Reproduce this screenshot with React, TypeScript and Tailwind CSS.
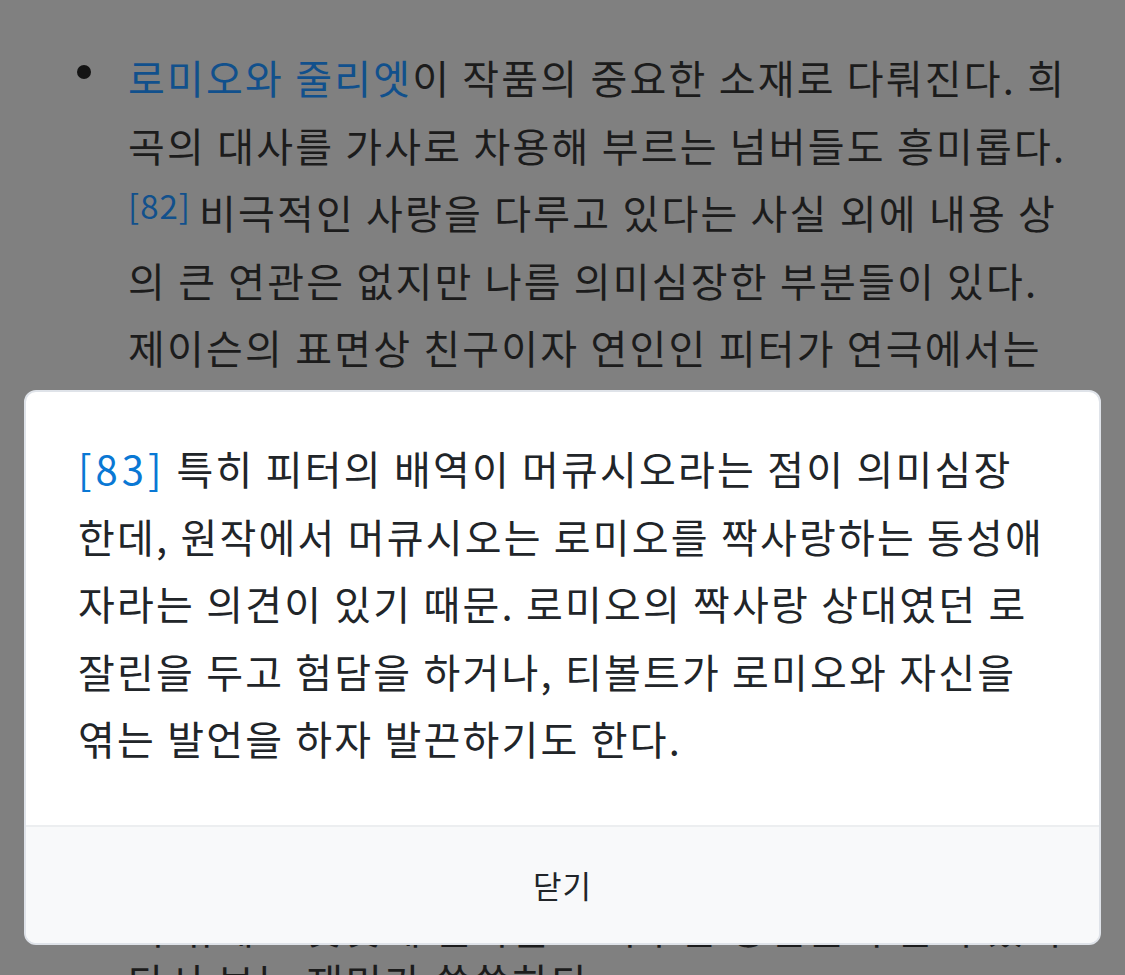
import React from "react";

const FONT = { fontFamily: '"Noto Sans CJK KR", "Noto Sans", sans-serif' };

const articleLines: React.ReactNode[] = [
  <>
    <a className="text-[#11508c]">로미오와 줄리엣</a>이 작품의 중요한 소재로 다뤄진다. 희
  </>,
  <>곡의 대사를 가사로 차용해 부르는 넘버들도 흥미롭다.</>,
  <>
    <span className="relative top-[-10px] mr-[8px] text-[33px] leading-[0] tracking-[1px] text-[#11508c]">[82]</span>
    비극적인 사랑을 다루고 있다는 사실 외에 내용 상
  </>,
  <>의 큰 연관은 없지만 나름 의미심장한 부분들이 있다.</>,
  <>제이슨의 표면상 친구이자 연인인 피터가 연극에서는</>,
  <>로미오의 절친한 친구인 머큐시오 역을 맡게 되는데,</>,
  <>이는 극 중 두 사람의 관계를 은근히 암시하는 장치이</>,
  <>기도 하다. 또한 작품 후반부의 결말 역시 원작의 비극</>,
  <>적인 결말과 겹쳐 보이도록 연출되어 있어 관객들에게</>,
  <>여러 가지 해석의 여지를 남긴다. 특히 마지막 장면에</>,
  <>서 두 사람이 나누는 대사는 원작의 구절을 그대로 가</>,
  <>져온 것으로, 극의 분위기를 한층 더 고조시킨다.</>,
];

const tailLines: React.ReactNode[] = [
  <>이 밖에도 곳곳에 원작을 오마주한 장면들이 숨어 있어</>,
  <>다시 보는 재미가 쏠쏠하다.</>,
];

const noteLines: React.ReactNode[] = [
  <>
    <a className="tracking-[4px] text-[#0a78d4]">[83]</a> 특히 피터의 배역이 머큐시오라는 점이 의미심장
  </>,
  <>한데, 원작에서 머큐시오는 로미오를 짝사랑하는 동성애</>,
  <>자라는 의견이 있기 때문. 로미오의 짝사랑 상대였던 로</>,
  <>잘린을 두고 험담을 하거나, 티볼트가 로미오와 자신을</>,
  <>엮는 발언을 하자 발끈하기도 한다.</>,
];

function Lines({ items }: { items: React.ReactNode[] }) {
  return (
    <>
      {items.map((line, i) => (
        <div key={i} className="whitespace-nowrap">
          {line}
        </div>
      ))}
    </>
  );
}

export default function App() {
  return (
    <div
      className="relative h-[975px] w-[1125px] overflow-hidden bg-[#808080]"
      style={FONT}
    >
      {/* article text behind the dimmed overlay */}
      <div className="flex flex-col pt-[44px] text-[40px] leading-[67.5px] tracking-[2.2px] text-[#1c1c1c]">
        <div className="flex">
          <div className="flex w-[128px] justify-end pr-[37px] pt-[21px]">
            <span className="h-[14px] w-[14px] rounded-full bg-[#141414]" />
          </div>
          <div className="flex flex-col">
            <Lines items={articleLines} />
          </div>
        </div>
        <div className="mt-[46px] flex flex-col pl-[128px] leading-[54px]">
          <Lines items={tailLines} />
        </div>
      </div>

      {/* footnote dialog */}
      <div className="absolute left-[24px] top-[390px] flex h-[555px] w-[1077px] flex-col overflow-hidden rounded-[12px] border-2 border-[#dfe3e9] bg-white">
        <div className="flex flex-1 flex-col pl-[52px] pt-[43px] text-[40px] leading-[67.5px] tracking-[2.2px] text-[#212529]">
          <Lines items={noteLines} />
        </div>
        <div className="flex h-[118px] items-center justify-center border-t-2 border-[#eceef0] bg-[#f8f9fa] text-[31px] tracking-[1px] text-[#212529]">
          닫기
        </div>
      </div>
    </div>
  );
}
